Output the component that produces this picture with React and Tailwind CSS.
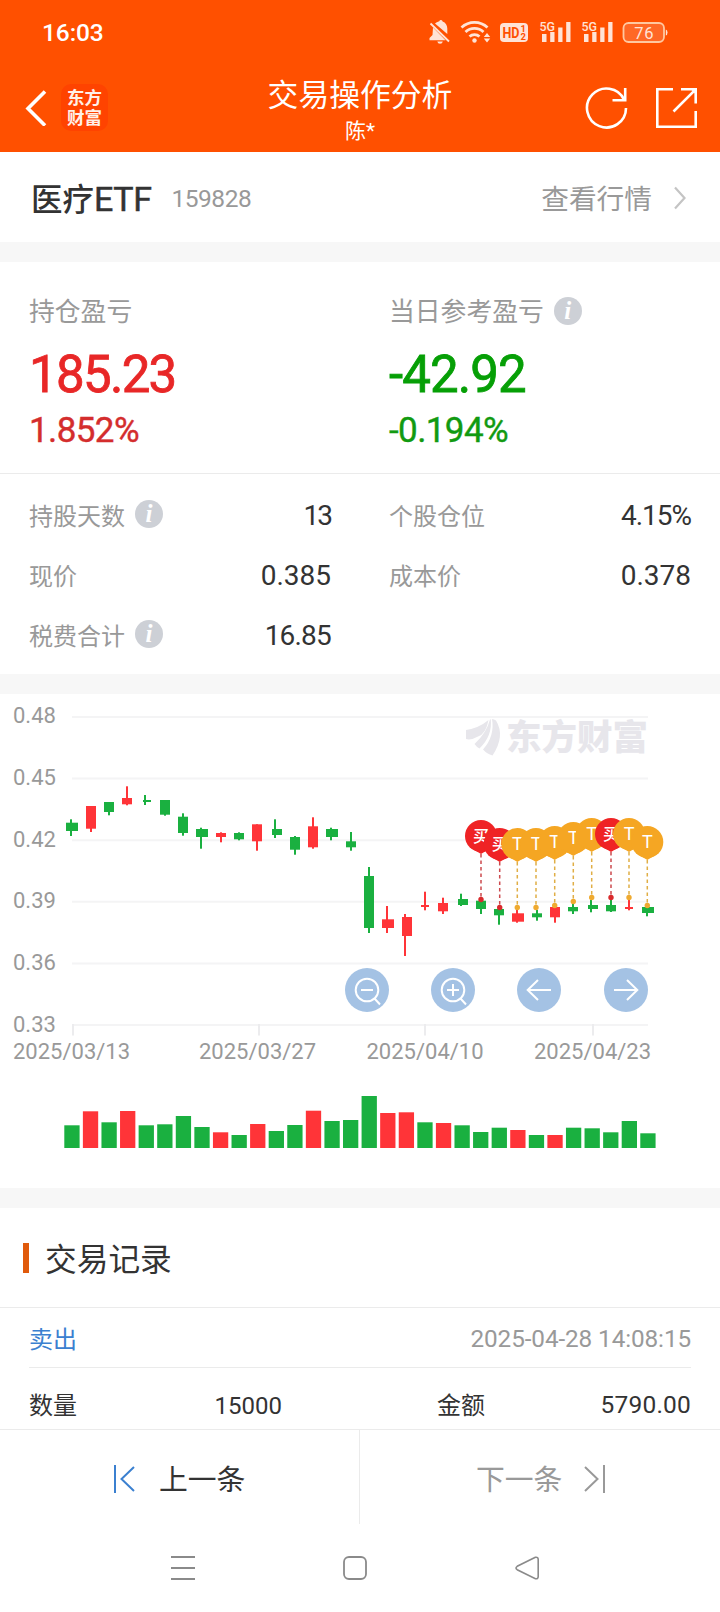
const RED = "#ff3438";
const GREEN = "#1ab040";

const yLabels = ["0.48", "0.45", "0.42", "0.39", "0.36", "0.33"];

const dates = [
  { label: "2025/03/13", x: 13, tick: 73 },
  { label: "2025/03/27", x: 199, tick: 259 },
  { label: "2025/04/10", x: 366.5, tick: 425 },
  { label: "2025/04/23", x: 534, tick: 593 },
];

// [body x, body width, wick x, high, body top, body bottom, low, colour]
const candles = [
  [66, 12, 70, 125.3, 128.7, 137, 142, GREEN],
  [86, 10, 90, 112, 112, 134.7, 138, RED],
  [104, 10, 108, 108, 108, 118, 121.3, GREEN],
  [122, 10, 126, 92.3, 104, 110.3, 111.3, RED],
  [143, 8, 144, 101, 106, 108, 111, GREEN],
  [160, 10, 164, 106, 106, 120.7, 121.7, GREEN],
  [178, 10, 182, 119.3, 122.7, 139, 141.7, GREEN],
  [196, 12, 200, 133.7, 135, 143, 154.7, GREEN],
  [216, 10, 220, 138.3, 139, 143, 148.3, RED],
  [234, 10, 238, 138.3, 139, 145.3, 146.3, GREEN],
  [252, 10, 256, 130.3, 130.3, 147.3, 156.7, RED],
  [272, 10, 274, 125.3, 135, 141, 144, GREEN],
  [290, 10, 294, 142, 143, 155.7, 160.7, GREEN],
  [308, 10, 312, 123.3, 132.3, 153.3, 154.7, RED],
  [326, 12, 330, 133.7, 135, 143, 146.3, GREEN],
  [346, 10, 350, 138, 147.3, 153.3, 156.7, GREEN],
  [364, 10, 368, 173, 182, 234, 239, GREEN],
  [382, 12, 386, 212, 225.3, 234, 239, RED],
  [402, 10, 404, 220, 223, 242, 262, RED],
  [421, 8, 424, 197.7, 211, 213, 216.3, RED],
  [438, 10, 442, 203.7, 209, 217.3, 220, RED],
  [458, 10, 460, 199.7, 205, 211, 212, GREEN],
  [476, 10, 480, 206.7, 206.7, 215, 220, GREEN],
  [494, 10, 498, 214, 215, 221.3, 230.7, GREEN],
  [512, 12, 516, 216, 219.3, 227.7, 228.7, RED],
  [532, 10, 536, 216, 219.3, 223.3, 226.7, GREEN],
  [550, 10, 554, 213, 213, 223.3, 228.7, RED],
  [568, 10, 572, 209.3, 213, 217.3, 220, GREEN],
  [588, 10, 590, 206, 211, 215, 218.3, GREEN],
  [606, 10, 610, 206, 211, 217.3, 218, GREEN],
  [625, 8, 628, 205.3, 213, 215, 216.3, RED],
  [642, 12, 646, 213, 213, 219, 222.3, GREEN],
];

const volumes = [
  22.7, 36.7, 25.7, 37, 22.7, 23.7, 32, 21, 15.7, 13, 24, 17, 23, 37.3, 27, 28,
  52, 35, 35.7, 25.7, 25, 22.7, 16, 20.3, 18, 13, 13, 20.3, 19.7, 15.7, 27, 14.7,
];

// days that closed flat count as green in the volume bars
const redVolumes = [1, 3, 8, 10, 13, 17, 18, 20, 24, 26];

// x, top of the pin, trade type
const pins = [
  [481, 126, "买"],
  [499.7, 134, "买"],
  [517.3, 134, "T"],
  [536, 134, "T"],
  [554.7, 132, "T"],
  [573.3, 128, "T"],
  [591.7, 124, "T"],
  [611, 124, "买"],
  [629, 124, "T"],
  [647.3, 132, "T"],
];

export default function App() {
  return (
    <div className="flex h-[1612px] w-[720px] flex-col overflow-hidden bg-white font-['Roboto','Noto_Sans_CJK_SC',sans-serif] text-[#333333]">
      <Header />

      <section className="flex h-[90px] shrink-0 items-center justify-between pr-[34px] pl-[31px]">
        <div className="flex items-center">
          <h2 className="mt-[5px] text-[31.5px] leading-[40px] font-medium">
            医疗<span className="text-[34px] font-normal tracking-[-0.4px] [-webkit-text-stroke:0.5px_#333333]">ETF</span>
          </h2>
          <span className="mt-1 ml-[20px] text-[24.5px] leading-8 tracking-[-0.5px] text-[#999999]">159828</span>
        </div>
        <div className="flex items-center gap-[22px] text-[#999999]">
          <span className="mt-[5px] text-[27.7px] leading-8">查看行情</span>
          <svg className="mt-[2px] h-[24px] w-[12px]" viewBox="0 0 12 24" fill="none" stroke="#c4c4c4" strokeWidth="2.2">
            <path d="M1 1.5L10.5 12L1 22.5" />
          </svg>
        </div>
      </section>

      <Gap />

      <section className="grid h-[212px] shrink-0 grid-cols-[360px_360px] border-b border-[#ebebeb] pt-[31px] pl-[29px]">
        <div>
          <p className="flex h-9 items-center pt-[2px] text-[25.8px] text-[#999999]">持仓盈亏</p>
          <p className="mt-[16px] text-[51px] leading-[60px] tracking-[-1.7px] text-[#e82727] [-webkit-text-stroke:0.8px_#e82727]">185.23</p>
          <p className="mt-[6px] text-[35px] leading-10 tracking-[-0.6px] text-[#d42d2d] [-webkit-text-stroke:0.4px_#d42d2d]">1.852%</p>
        </div>
        <div>
          <p className="flex h-9 items-center gap-[10px] text-[25.8px] text-[#999999]">
            <span className="mt-[2px]">当日参考盈亏</span>
            <Info />
          </p>
          <p className="mt-[16px] text-[51px] leading-[60px] tracking-[-0.9px] text-[#069f06] [-webkit-text-stroke:0.8px_#069f06]">-42.92</p>
          <p className="mt-[6px] text-[35px] leading-10 tracking-[-0.6px] text-[#119a11] [-webkit-text-stroke:0.4px_#119a11]">-0.194%</p>
        </div>
      </section>

      <section className="grid h-[200px] shrink-0 grid-cols-[302px_302px] grid-rows-[60px_60px_60px] gap-x-[58px] py-[10px] pl-[29px]">
        <Stat label="持股天数" value="13" tracking="tracking-[-2px]" info />
        <Stat label="个股仓位" value="4.15%" tracking="tracking-[-1px]" />
        <Stat label="现价" value="0.385" />
        <Stat label="成本价" value="0.378" />
        <Stat label="税费合计" value="16.85" tracking="tracking-[-0.8px]" info />
      </section>

      <Gap />
      <Chart />
      <Gap />

      <section className="flex h-[100px] shrink-0 items-center gap-4 border-b border-[#ebebeb] pl-[23px]">
        <span className="h-[30px] w-[6px] bg-[#e05a0c]" />
        <h2 className="mt-[6px] text-[31.7px] leading-10">交易记录</h2>
      </section>

      <section className="flex h-[121px] shrink-0 flex-col px-[29px]">
        <div className="flex h-[60px] items-center justify-between border-b border-[#ebebeb] pt-[4px]">
          <span className="text-[24px] text-[#3b80d0]">卖出</span>
          <span className="text-[24.3px] tracking-[-0.1px] text-[#999999]">2025-04-28 14:08:15</span>
        </div>
        <div className="flex flex-1 items-center pt-[14px] text-[24px]">
          <span className="w-[120px]">数量</span>
          <span className="w-[133px] text-right">15000</span>
          <span className="ml-[155px]">金额</span>
          <span className="flex-1 text-right text-[24.5px] tracking-[0.2px]">5790.00</span>
        </div>
      </section>

      <div className="grid h-[95px] shrink-0 grid-cols-2 border-t border-[#ebebeb] text-[28.8px]">
        <button className="flex items-center border-r border-[#ebebeb] pt-[4px] pl-[113px]">
          <svg className="h-[30px] w-[24px]" viewBox="0 0 24 30" fill="none" stroke="#3b80d0" strokeWidth="2">
            <path d="M2 1v28M21 3L8.500 15L21 27" />
          </svg>
          <span className="mt-[4px] ml-[22px]">上一条</span>
        </button>
        <button className="flex items-center pt-[4px] pl-[116px] text-[#999999]">
          <span className="mt-[4px]">下一条</span>
          <svg className="ml-[21px] h-[30px] w-[24px]" viewBox="0 0 24 30" fill="none" stroke="#999999" strokeWidth="2">
            <path d="M2 3L14.500 15L2 27M21 1v28" />
          </svg>
        </button>
      </div>

      <nav className="flex flex-1 items-start gap-[146px] pt-[31px] pl-[170px]">
        <svg className="h-[26px] w-[26px]" viewBox="0 0 26 26" fill="none" stroke="#8a8a8a" strokeWidth="1.8">
          <path d="M1 2h24M1 13h24M1 24h24" />
        </svg>
        <svg className="h-[26px] w-[26px]" viewBox="0 0 26 26" fill="none" stroke="#8a8a8a" strokeWidth="1.8">
          <rect x="2" y="2" width="22" height="22" rx="5" />
        </svg>
        <svg className="h-[26px] w-[26px]" viewBox="0 0 26 26" fill="none" stroke="#8a8a8a" strokeWidth="1.6">
          <path d="M21.400 2.300L3.200 11.300Q0.800 13 3.200 14.700L21.400 23.700Q24.200 24.200 24.200 21.500V4.500Q24.200 1.800 21.400 2.300Z" />
        </svg>
      </nav>
    </div>
  );
}

function Header() {
  return (
    <header className="h-[152px] shrink-0 bg-[#ff5000] text-white">
      <div className="flex h-[64px] items-center justify-between pr-[51px] pl-[42px]">
        <span className="mt-[2px] text-[24.5px] font-medium tracking-[-0.1px]">16:03</span>
        <StatusIcons />
      </div>
      <div className="grid h-[88px] grid-cols-[200px_1fr_200px]">
        <div className="flex items-start pt-[20px] pl-[25px]">
          <svg className="mt-[6px] h-[36px] w-[22px]" viewBox="0 0 22 36" fill="none" stroke="#ffffff" strokeWidth="3.600">
            <path d="M20 1.500L3 18.500L20 35.500" />
          </svg>
          <div className="ml-[14px] flex h-[47px] w-[47px] flex-col items-center justify-center rounded-[10px] bg-[#ff4300] pt-px text-[17.5px] leading-[20px] font-bold text-[#fff0e8]">
            <span>东方</span>
            <span>财富</span>
          </div>
        </div>
        <div className="flex flex-col items-center pt-[12px]">
          <h1 className="text-[30.8px] leading-[40px]">交易操作分析</h1>
          <p className="text-[21px] leading-[30px]">陈*</p>
        </div>
        <div className="flex items-start gap-[26px] pt-[22px] pl-[65px]">
          <svg className="h-[44px] w-[44px]" viewBox="0 0 44 44" fill="none" stroke="#ffffff" strokeWidth="2.600">
            <path d="M41 22a19.500 19.500 0 1 1-1.900-8.400M27.500 14.200h12.700V2" />
          </svg>
          <svg className="h-[44px] w-[44px]" viewBox="0 0 44 44" fill="none" stroke="#ffffff" strokeWidth="2.600">
            <path d="M18 3.300H2.300V40.700H40.700V25M26 3.300H40.700V17.500M40.700 3.300L18.500 25.500" />
            <path d="M36 3.500H40.500V8Z" fill="#ffffff" stroke="none" />
          </svg>
        </div>
      </div>
    </header>
  );
}

function StatusIcons() {
  return (
    <svg className="h-[28px] w-[241px]" viewBox="0 0 241 28" fill="#ffe3d6">
      {/* muted bell */}
      <path d="M10 3.800Q10.600 3.400 11.300 3.200a1.700 1.700 0 0 1 3.300.3c3 1 4.700 3.800 4.700 7v5.500L7 5.600c.8-.8 1.900-1.400 3-1.800zM5 9.500L17.500 22.300H1.500v-2.200l3-3.200zM9.300 23.500h5.500a2.800 2.800 0 0 1-5.500 0z" />
      <path d="M2.500 5.500L21 23.500" fill="none" stroke="#ffe3d6" strokeWidth="1.800" />
      {/* wifi */}
      <g fill="none" stroke="#ffe3d6" strokeWidth="2.800">
        <path d="M33.500 9.500a19 19 0 0 1 26 0" />
        <path d="M37.500 14a13 13 0 0 1 18 0" />
        <path d="M41.500 18.500a7.500 7.500 0 0 1 10 0" />
      </g>
      <circle cx="46.500" cy="22.500" r="2.200" />
      <path d="M59 15l3.200 4h-6.400zM59 24.500l3.200-4h-6.400z" />
      {/* HD badge */}
      <rect x="72" y="5" width="28" height="19" rx="4" />
      <text x="74.500" y="19.800" fontSize="15" fontWeight="700" fill="#ff5000" textLength="17" lengthAdjust="spacingAndGlyphs">HD</text>
      <text x="92.500" y="14" fontSize="9.500" fontWeight="700" fill="#ff5000">1</text>
      <text x="92.500" y="22.300" fontSize="9.500" fontWeight="700" fill="#ff5000">2</text>
      <Signal x={112} />
      <Signal x={154} />
      {/* battery */}
      <rect x="195.500" y="5" width="40.500" height="19" rx="5" fill="#ff6826" stroke="#ffc8a0" strokeWidth="1.800" />
      <path d="M237.800 11.500q1.700.5 1.700 3t-1.700 3z" />
      <text x="216.300" y="20.500" fontSize="16.500" textAnchor="middle" letterSpacing="0.800">76</text>
    </svg>
  );
}

function Signal({ x }) {
  return (
    <g transform={`translate(${x} 0)`}>
      <text x="-0.500" y="12.700" fontSize="13.500" fontWeight="500" textLength="15.500" lengthAdjust="spacingAndGlyphs">5G</text>
      <rect x="2" y="16" width="4.500" height="8" />
      <rect x="10.200" y="14" width="4.300" height="10" />
      <rect x="18.200" y="9.500" width="4.300" height="14.500" />
      <rect x="26.200" y="4" width="4.300" height="20" />
    </g>
  );
}

function Gap() {
  return <div className="h-5 shrink-0 bg-[#f7f7f7]" />;
}

function Info() {
  return (
    <span className="flex h-7 w-7 items-center justify-center rounded-full bg-[#cdd0d6] font-['Liberation_Serif',serif] text-[25px] leading-7 font-bold text-white italic">
      i
    </span>
  );
}

function Stat({ label, value, tracking = "tracking-normal", info }) {
  return (
    <div className="flex items-center">
      <span className="mt-[5px] text-[24px] text-[#999999]">{label}</span>
      {info && <span className="ml-[10px]"><Info /></span>}
      <span className={`mt-[4px] ml-auto text-[28px] ${tracking}`}>{value}</span>
    </div>
  );
}

function Pin({ x, top, type }) {
  const color = type === "T" ? "#f5a623" : "#ef2325";
  const lineColor = type === "T" ? "#e0ae45" : "#cc4a4e";
  const cy = top + 16;
  return (
    <g>
      <path d={`M${x} ${top + 34}V${top + 78}`} stroke={lineColor} strokeWidth="1.500" strokeDasharray="3.500 3" />
      <circle cx={x} cy={top + 79.500} r="2.700" fill={type === "T" ? "#efaa30" : "#d92a2c"} />
      <circle cx={x} cy={cy} r="16" fill={color} />
      <path d={`M${x - 11.500} ${cy + 11}L${x} ${top + 34}L${x + 11.500} ${cy + 11}Z`} fill={color} />
      <text
        x={x}
        y={cy + 6}
        textAnchor="middle"
        fontSize={type === "T" ? 18 : 16}
        fontWeight={type === "T" ? 400 : 500}
        fill="#ffffff"
      >
        {type}
      </text>
    </g>
  );
}

function Chart() {
  return (
    <svg className="h-[494px] w-[720px] shrink-0" viewBox="0 0 720 494">
      {yLabels.map((label, i) => (
        <g key={label}>
          <path d={`M72 ${23 + i * 61.6}H648`} stroke="#f4f4f5" strokeWidth="2" />
          <text x="13" y={28.9 + i * 61.800} fontSize="22" fill="#999999">{label}</text>
        </g>
      ))}
      {dates.map((d) => (
        <g key={d.label}>
          <path d={`M${d.tick} 330V341.500`} stroke="#ececee" strokeWidth="2" />
          <text x={d.x} y="365.300" fontSize="22" fill="#999999">{d.label}</text>
        </g>
      ))}

      {/* watermark */}
      <g fill="#e7e6eb">
        <path d="M466 36Q479 34 488.500 26Q486 40 478 42.500Q471 46.500 466 45Z" />
        <path d="M490 25.500Q486.500 39 474.500 50Q476.500 53 479.500 54.500Q492.500 42 490.800 25.300Z" />
        <path d="M492 25Q495 42 483 55.500Q487 60 492.500 61.500Q505.500 42 496 26.500Q494 25.200 492 25Z" />
        <text x="506" y="55.500" fontSize="35.500" fontWeight="900">东方财富</text>
      </g>

      {candles.map(([x, w, wick, high, top, bottom, low, color]) => (
        <g key={x} fill={color}>
          <rect x={wick} y={high} width="2" height={low - high} />
          <rect x={x} y={top} width={w} height={bottom - top} />
        </g>
      ))}

      {pins.map(([x, top, type]) => (
        <Pin key={x} x={x} top={top} type={type} />
      ))}

      {volumes.map((v, i) => (
        <rect key={i} x={64.3 + i * 18.580} y={454 - v} width="15.300" height={v} fill={redVolumes.includes(i) ? RED : GREEN} />
      ))}

      {/* zoom and pan buttons */}
      <g fill="#a4c2e4">
        <circle cx="367" cy="296" r="22" />
        <circle cx="453" cy="296" r="22" />
        <circle cx="539" cy="296" r="22" />
        <circle cx="626" cy="296" r="22" />
      </g>
      <g fill="none" stroke="#ffffff" strokeWidth="2">
        <circle cx="367" cy="296" r="11.300" />
        <path d="M361 296h12M374.500 304.500l5.500 6" />
        <circle cx="453" cy="296" r="11.300" />
        <path d="M447 296h12M453 290v12M460.500 304.500l5.500 6" />
        <path d="M551 296h-23M538 286l-10.300 10l10.300 10" />
        <path d="M614 296h23M627 286l10.300 10l-10.300 10" />
      </g>
    </svg>
  );
}
